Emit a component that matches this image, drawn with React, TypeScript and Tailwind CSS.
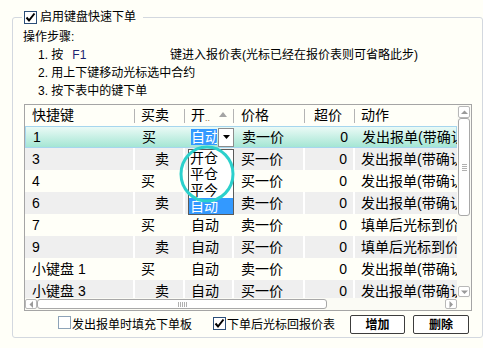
import React from "react"

type Row = {
    key: string
    side: "买" | "卖"
    price: string
    action: string
}

const ROWS: Row[] = [
    { key: "1", side: "买", price: "卖一价", action: "发出报单(带确认)" },
    { key: "3", side: "卖", price: "买一价", action: "发出报单(带确认)" },
    { key: "4", side: "买", price: "买一价", action: "发出报单(带确认)" },
    { key: "6", side: "卖", price: "卖一价", action: "发出报单(带确认)" },
    { key: "7", side: "买", price: "卖一价", action: "填单后光标到价格" },
    { key: "9", side: "卖", price: "买一价", action: "填单后光标到价格" },
    { key: "小键盘 1", side: "买", price: "卖一价", action: "发出报单(带确认)" },
    { key: "小键盘 3", side: "卖", price: "买一价", action: "发出报单(带确认)" },
]

const OPEN_OPTIONS = ["开仓", "平仓", "平今", "自动"]

const Checkbox = ({ checked }: { checked?: boolean }) => (
    <span
        className={`inline-flex w-[13px] h-[13px] shrink-0 items-center justify-center border bg-white ${
            checked ? "border-[#2a4d78]" : "border-[#8ea3b8]"
        }`}
    >
        {checked && (
            <svg width="11" height="11" viewBox="0 0 11 11">
                <polyline points="1.5,5.5 4,8.5 9.5,1.5" fill="none" stroke="#000" strokeWidth="2" />
            </svg>
        )}
    </span>
)

const Arrow = ({ dir }: { dir: "up" | "down" | "left" | "right" }) => {
    const pts = {
        up: "1,5 4.5,1.5 8,5",
        down: "1,1.5 4.5,5 8,1.5",
        left: "5,1 1.5,4.5 5,8",
        right: "1.5,1 5,4.5 1.5,8",
    }[dir]
    const size = dir === "up" || dir === "down" ? { w: 9, h: 6 } : { w: 6, h: 9 }
    return (
        <svg width={size.w} height={size.h} viewBox={`0 0 ${size.w} ${size.h}`}>
            <polygon points={pts} fill="#9a9a9a" />
        </svg>
    )
}

const VScroll = () => (
    <div className="w-[14px] shrink-0 h-full flex flex-col bg-[#fbfbf5] px-[1px] py-[1px]">
        <div className="h-[12px] rounded-[2px] border border-[#b8b8b8] bg-white flex items-center justify-center">
            <Arrow dir="up" />
        </div>
        <div className="h-[98px] rounded-[3px] border border-[#a8a8a8] bg-white flex flex-col items-center justify-center gap-[1px]">
            <span className="w-[5px] h-px bg-[#b0b0b0]" />
            <span className="w-[5px] h-px bg-[#b0b0b0]" />
            <span className="w-[5px] h-px bg-[#b0b0b0]" />
            <span className="w-[5px] h-px bg-[#b0b0b0]" />
        </div>
        <div className="flex-1" />
        <div className="h-[11px] rounded-[2px] border border-[#b8b8b8] bg-white flex items-center justify-center">
            <Arrow dir="down" />
        </div>
    </div>
)

const HScroll = () => (
    <div className="w-[432px] h-full flex bg-[#fbfbf5] py-[1px]">
        <div className="w-[12px] rounded-[2px] border border-[#b8b8b8] bg-white flex items-center justify-center">
            <Arrow dir="left" />
        </div>
        <div className="w-[290px] rounded-[3px] border border-[#a8a8a8] bg-white flex items-center justify-center gap-[1px]">
            <span className="w-px h-[5px] bg-[#b0b0b0]" />
            <span className="w-px h-[5px] bg-[#b0b0b0]" />
            <span className="w-px h-[5px] bg-[#b0b0b0]" />
            <span className="w-px h-[5px] bg-[#b0b0b0]" />
            <span className="w-px h-[5px] bg-[#b0b0b0]" />
        </div>
        <div className="flex-1" />
        <div className="w-[12px] rounded-[2px] border border-[#b8b8b8] bg-white flex items-center justify-center">
            <Arrow dir="right" />
        </div>
    </div>
)

const HeaderSep = () => <span className="w-px h-[14px] bg-[#b4b4b4] shrink-0" />

const Header = () => (
    <div className="flex h-[21px] items-center text-[14px] whitespace-nowrap">
        <div className="w-[110px] shrink-0 flex items-center">
            <span className="pl-[7px]">快捷键</span>
            <span className="flex-1" />
            <HeaderSep />
        </div>
        <div className="w-[50px] shrink-0 flex items-center">
            <span className="pl-[6px]">买卖</span>
            <span className="flex-1" />
            <HeaderSep />
        </div>
        <div className="w-[49px] shrink-0 flex items-center">
            <span className="pl-[6px]">开</span>
            <span className="text-[9px] text-[#8a6a3a] leading-none mt-[6px]">..</span>
            <span className="ml-[9px] mt-[-2px]">
                <svg width="8" height="5" viewBox="0 0 8 5">
                    <polygon points="0,5 4,0 8,5" fill="#a4a4a4" />
                </svg>
            </span>
            <span className="flex-1" />
            <HeaderSep />
        </div>
        <div className="w-[71px] shrink-0 flex items-center">
            <span className="pl-[7px]">价格</span>
            <span className="flex-1" />
            <HeaderSep />
        </div>
        <div className="w-[50px] shrink-0 flex items-center">
            <span className="flex-1" />
            <span className="pr-[12px]">超价</span>
            <HeaderSep />
        </div>
        <div className="w-[140px] shrink-0 flex items-center">
            <span className="pl-[6px]">动作</span>
        </div>
    </div>
)

const OpenEditor = () => (
    <div className="relative h-full flex items-center pl-[5px]">
        <span className="w-[26px] h-[16px] leading-[16px] overflow-hidden whitespace-nowrap bg-[#3399ff] text-white">
            自动
        </span>
        <span className="ml-[1px] w-[16px] h-[19px] border border-[#8c8c8c] bg-white flex items-center justify-center">
            <svg width="7" height="4" viewBox="0 0 7 4">
                <polygon points="0,0 7,0 3.5,4" fill="#000" />
            </svg>
        </span>
        {/* dropdown list */}
        <div className="absolute left-[2px] top-[22px] z-10 w-[46px] border border-[#5a5a5a] bg-white">
            {OPEN_OPTIONS.map((o) => (
                <div
                    key={o}
                    className={`h-[16px] leading-[16px] pl-[1px] ${o === "自动" ? "bg-[#3399ff] text-white" : ""}`}
                >
                    {o}
                </div>
            ))}
        </div>
        {/* annotation circle around the options */}
        <svg className="absolute left-[-9px] top-[17px] z-20 pointer-events-none" width="60" height="60" viewBox="0 0 60 60">
            <ellipse cx="30" cy="30" rx="26" ry="27" fill="none" stroke="#2cd0cc" strokeWidth="3" />
        </svg>
    </div>
)

const TableRow = ({ row, index }: { row: Row; index: number }) => {
    const selected = index === 0
    const gray = index % 2 === 1
    // rows 2..4 sit under the open dropdown list
    const hidden = index >= 1 && index <= 3
    const cell = `h-full shrink-0 flex items-center border-r-2 ${gray ? "border-white bg-[#efefef]" : "border-transparent"}`

    return (
        <div
            className={`flex h-[22px] text-[14px] whitespace-nowrap ${
                selected ? "border border-[#a6d6ee] bg-gradient-to-b from-[#eafaf6] to-[#a4e6d4]" : ""
            }`}
        >
            <div className={`${cell} w-[110px] pl-[7px]`}>{row.key}</div>
            <div className={`${cell} w-[50px] ${row.side === "卖" ? "pl-[20px]" : "pl-[6px]"}`}>{row.side}</div>
            <div className={`${cell} w-[49px] ${selected ? "" : "pl-[6px]"}`}>
                {selected ? <OpenEditor /> : hidden ? null : "自动"}
            </div>
            <div className={`${cell} w-[71px] pl-[7px]`}>{row.price}</div>
            <div className={`${cell} w-[50px] justify-end pr-[6px]`}>0</div>
            <div className={`${cell} w-[140px] pl-[6px] overflow-hidden`}>{row.action}</div>
        </div>
    )
}

export default function App() {
    return (
        <div className="relative w-[483px] h-[348px] overflow-hidden bg-[#fffff8] pt-[9px] pl-[12px] text-black font-['Liberation_Sans','Noto_Sans_CJK_SC',sans-serif]">
            <fieldset className="w-[469px] h-[329px] border border-[#d3d8df] rounded-[3px] px-[10px]">
                <legend className="ml-[-1px] pl-[2px] pr-[7px] h-[16px]">
                    <span className="flex items-center h-[16px] text-[12px] leading-[16px]">
                        <Checkbox checked />
                        <span className="ml-[3px]">启用键盘快速下单</span>
                    </span>
                </legend>

                {/* Steps */}
                <div className="pt-[3px] text-[12px] leading-[18px] whitespace-nowrap">
                    <div>操作步骤:</div>
                    <div className="pl-[15px]">
                        <span className="inline-block w-[132px]">
                            1. 按<span className="ml-[9px] text-[#1c2470]">F1</span>
                        </span>
                        键进入报价表(光标已经在报价表则可省略此步)
                    </div>
                    <div className="pl-[15px]">2. 用上下键移动光标选中合约</div>
                    <div className="pl-[15px]">3. 按下表中的键下单</div>
                </div>

                {/* Table */}
                <div className="ml-[1px] mt-[4px] w-[448px] border border-[#a5a5a5]">
                    <div className="flex h-[193px]">
                        <div className="w-[432px] shrink-0 overflow-hidden">
                            <Header />
                            {ROWS.map((r, i) => (
                                <TableRow key={r.key} row={r} index={i} />
                            ))}
                        </div>
                        <VScroll />
                    </div>
                    <div className="flex h-[12px]">
                        <HScroll />
                        <div className="w-[14px]" />
                    </div>
                </div>

                {/* Options + buttons */}
                <div className="mt-[4px] flex items-center h-[19px] text-[12px] whitespace-nowrap">
                    <span className="ml-[35px]">
                        <Checkbox />
                    </span>
                    <span className="ml-[1px]">发出报单时填充下单板</span>
                    <span className="ml-[21px]">
                        <Checkbox checked />
                    </span>
                    <span className="ml-[1px]">下单后光标回报价表</span>
                    <button className="ml-[15px] w-[55px] h-[19px] border border-[#3c3c3c] rounded-[2px] bg-white font-bold text-[12px]">
                        增加
                    </button>
                    <button className="ml-[8px] w-[56px] h-[19px] border border-[#3c3c3c] rounded-[2px] bg-white font-bold text-[12px]">
                        删除
                    </button>
                </div>
            </fieldset>
        </div>
    )
}
